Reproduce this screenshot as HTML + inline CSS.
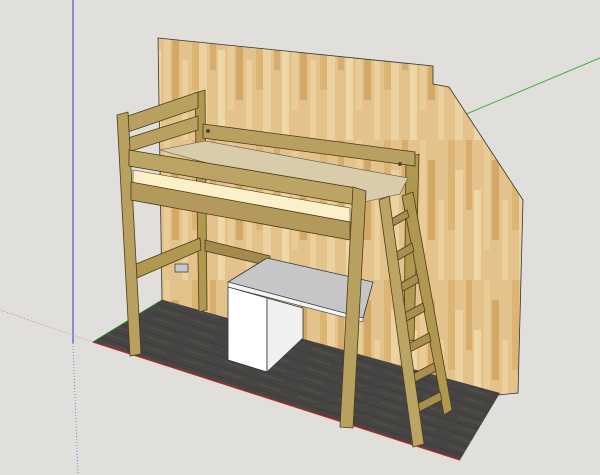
<!DOCTYPE html>
<html><head><style>html,body{margin:0;padding:0;background:#e0dfdb;}svg{display:block}</style></head>
<body>
<svg width="600" height="475" viewBox="0 0 600 475" xmlns="http://www.w3.org/2000/svg">
<defs>
<pattern id="wood" width="64" height="140" patternUnits="userSpaceOnUse">
<rect width="64" height="140" fill="#e4c28c"/>
<rect x="0" y="0" width="7" height="90" fill="#dcb474"/>
<rect x="7" y="30" width="8" height="110" fill="#ecd2a0"/>
<rect x="18" y="0" width="6" height="70" fill="#d6ad6c"/>
<rect x="26" y="50" width="7" height="90" fill="#efd8a8"/>
<rect x="36" y="0" width="6" height="110" fill="#e9cc96"/>
<rect x="44" y="20" width="7" height="80" fill="#d2a864"/>
<rect x="54" y="60" width="6" height="80" fill="#ebd09c"/>
</pattern>
<pattern id="floor" width="40" height="10" patternUnits="userSpaceOnUse" patternTransform="rotate(18)">
<rect width="40" height="10" fill="#464543"/>
<rect y="0" width="40" height="1" fill="#3c3b39"/>
<rect x="5" y="4" width="22" height="2" fill="#4e4d4a"/>
</pattern>
</defs>
<rect width="600" height="475" fill="#e0dfdb"/>
<line x1="73" y1="0" x2="73" y2="343" stroke="#3030d0" stroke-width="1"/>
<line x1="73" y1="343" x2="78" y2="475" stroke="#8080d0" stroke-width="1" stroke-dasharray="1,2"/>
<line x1="93" y1="342" x2="0" y2="310" stroke="#d08080" stroke-width="1" stroke-dasharray="1,2"/>
<line x1="440" y1="125" x2="600" y2="58" stroke="#40b040" stroke-width="1"/>
<polygon points="158,38 433,66 433,84 449,87 523,200 518,393 498,395 162,300" fill="url(#wood)" stroke="#333" stroke-width="0.8"/>
<polygon points="93,342 162,300 500,393 460,460" fill="url(#floor)"/>
<line x1="93" y1="342" x2="460" y2="460" stroke="#c02020" stroke-width="1.2"/>
<line x1="93" y1="342" x2="162" y2="300" stroke="#208020" stroke-width="1"/>
<polygon points="195,93 205,90 207,310 199,312" fill="#b09850" stroke="#4a3c18" stroke-width="0.8"/>
<polygon points="406,158 419,154 414,340 404,342" fill="#b09850" stroke="#4a3c18" stroke-width="0.8"/>
<polygon points="136,264 200,238 201,250 137,278" fill="#b09850" stroke="#4a3c18" stroke-width="0.8"/>
<polygon points="205,240 270,256 270,266 205,251" fill="#a48a4c" stroke="#4a3c18" stroke-width="0.8"/>
<rect x="175" y="264" width="13" height="8" fill="#c8c8cc" stroke="#444" stroke-width="0.8"/>
<polygon points="228,282 267,258 373,282 363,318" fill="#c6c6c8" stroke="#333" stroke-width="0.8"/>
<polygon points="228,282 363,318 363,322 228,287" fill="#f4f4f4" stroke="#333" stroke-width="0.6"/>
<polygon points="228,287 267,298 267,372 228,360" fill="#ffffff" stroke="#333" stroke-width="0.8"/>
<polygon points="267,298 303,308 303,338 267,372" fill="#f0f0f0" stroke="#333" stroke-width="0.8"/>
<polygon points="128,116 198,92 198,108 128,132" fill="#b8a060" stroke="#4a3c18" stroke-width="0.8"/>
<polygon points="128,138 198,116 198,130 128,152" fill="#b8a060" stroke="#4a3c18" stroke-width="0.8"/>
<polygon points="203,124 415,152 415,166 203,138" fill="#b8a060" stroke="#4a3c18" stroke-width="0.8"/>
<circle cx="208" cy="131" r="2" fill="#5a4520"/><circle cx="400" cy="164" r="2" fill="#5a4520"/>
<polygon points="160,150 205,141 408,178 400,194 355,204" fill="#d9ccaa" stroke="#555" stroke-width="0.6"/>
<polygon points="117,115 128,112 141,354 130,356" fill="#b8a060" stroke="#4a3c18" stroke-width="0.8"/>
<polygon points="129,150 356,188 356,205 129,166" fill="#bca464" stroke="#4a3c18" stroke-width="0.8"/>
<polygon points="133,170 350,208 350,224 133,184" fill="#fbf0c8" stroke="#4a3c18" stroke-width="0.6"/>
<polygon points="131,182 350,222 350,240 131,200" fill="#b39a5c" stroke="#4a3c18" stroke-width="0.8"/>
<polygon points="353,187 366,191 353,428 340,427" fill="#b8a060" stroke="#4a3c18" stroke-width="0.8"/>
<polygon points="402,196 413,192 452,410 444,415" fill="#b09850" stroke="#4a3c18" stroke-width="0.8"/>
<g fill="#a88e50" stroke="#4a3c18" stroke-width="0.8">
<polygon points="386,222 407,210 409,217 388,229"/>
<polygon points="391,255 412,243 414,251 393,263"/>
<polygon points="396,286 417,274 419,282 398,294"/>
<polygon points="401,315 423,303 425,311 403,323"/>
<polygon points="406,345 429,333 431,341 408,353"/>
<polygon points="411,375 434,363 436,371 413,383"/>
<polygon points="415,405 440,392 442,400 417,413"/>
</g>
<polygon points="379,200 389,196 424,444 413,447" fill="#bca464" stroke="#4a3c18" stroke-width="0.8"/>
</svg>
</body></html>
